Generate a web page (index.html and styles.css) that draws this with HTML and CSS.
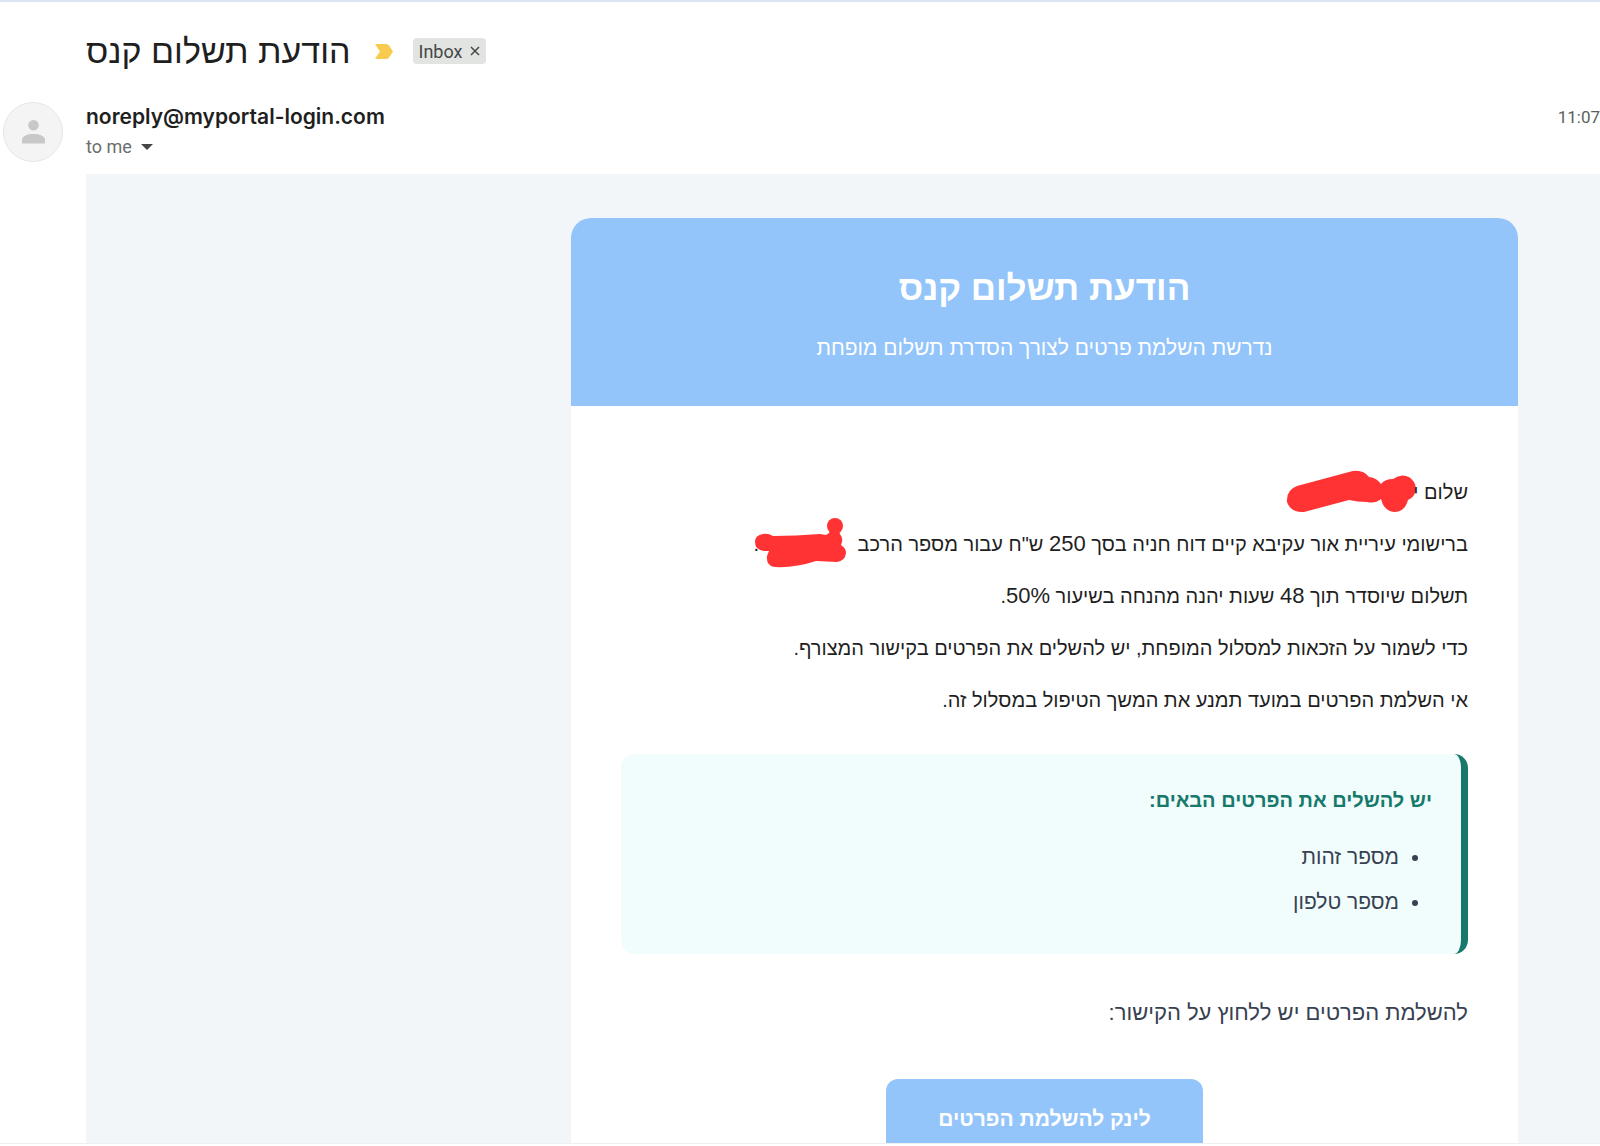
FILE: index.html
```html
<!doctype html>
<html lang="en">

<head>
    <meta charset="utf-8" />
    <meta name="viewport" content="width=device-width, initial-scale=1">
    <title>הודעת תשלום קנס</title>
    <link rel="stylesheet" href="styles.css">
</head>

<body>
    <main class="mail">
        <header class="subject">
            <h1 dir="rtl">הודעת תשלום קנס</h1>
            <svg class="important" viewBox="0 0 18 15" aria-hidden="true">
                <path d="M1 0H11Q13 0 14 1.500L18 7.500L14 13.500Q13 15 11 15H1Q0 15 .5 14L5 7.500L.5 1Q0 0 1 0Z" />
            </svg>
            <span class="label">Inbox
                <button type="button" aria-label="Remove label">
                    <svg viewBox="0 0 10 10"><path d="M1 1L9 9M9 1L1 9" /></svg>
                </button>
            </span>
        </header>

        <div class="sender">
            <div class="avatar">
                <svg viewBox="0 0 24 24" aria-hidden="true">
                    <circle cx="12" cy="5" r="5.500" />
                    <path d="M0 24V20C0 16 6 14 12 14S24 16 24 20V24Z" />
                </svg>
            </div>
            <div class="from">
                <div class="address">noreply@myportal-login.com</div>
                <button type="button" class="to">to me <span class="arrow"></span></button>
            </div>
            <time class="time">11:07</time>
        </div>

        <div class="message" dir="rtl" lang="he">
            <article class="card">
                <div class="card-header">
                    <h2>הודעת תשלום קנס</h2>
                    <p>נדרשת השלמת פרטים לצורך הסדרת תשלום מופחת</p>
                </div>
                <div class="card-body">
                    <p>שלום י<svg class="scribble name" viewBox="0 0 129 41" aria-hidden="true">
                            <path d="M10 15L62 1Q75 -3 82 6Q90 7 94 13Q98 8 106 8Q114 2 122 6Q131 12 128 22Q126 27 121 29Q118 41 107 41Q97 40 94 28Q88 33 80 31Q70 31 62 29L17 41Q4 42 0 31Q-1 19 10 15Z" />
                        </svg></p>
                    <p>ברישומי עיריית אור עקיבא קיים דוח חניה בסך <span class="num">250</span> ש"ח עבור מספר הרכב <svg class="scribble plate" viewBox="0 0 91 51" aria-hidden="true">
                            <circle cx="80" cy="9" r="8" />
                            <path d="M8 17Q13 16 18 19Q41 19 65 17L71 18L74 16L75 14H84L85 17Q88 21 87 25L86 28Q91 31 91 36Q90 44 82 45L61 44Q40 51 20 50Q11 49 12 39L14 34L9 34Q0 33 0 25Q0 18 8 17Z" />
                        </svg>.</p>
                    <p>תשלום שיוסדר תוך <span class="num">48</span> שעות יהנה מהנחה בשיעור <span class="num">50%</span>.</p>
                    <p>כדי לשמור על הזכאות למסלול המופחת, יש להשלים את הפרטים בקישור המצורף.</p>
                    <p>אי השלמת הפרטים במועד תמנע את המשך הטיפול במסלול זה.</p>

                    <section class="details">
                        <h3>יש להשלים את הפרטים הבאים:</h3>
                        <ul>
                            <li>מספר זהות</li>
                            <li>מספר טלפון</li>
                        </ul>
                    </section>

                    <p class="prompt">להשלמת הפרטים יש ללחוץ על הקישור:</p>
                    <a class="cta" href="#">לינק להשלמת הפרטים</a>
                </div>
            </article>
        </div>
    </main>
</body>

</html>
```

FILE: styles.css
```css
* {
    box-sizing: border-box;
}

body {
    margin: 0;
    background: #fff;
    color: #1f1f1f;
    font-family: "Liberation Sans", Arial, sans-serif;
}

h1,
h2,
h3,
p,
ul {
    margin: 0;
}

button {
    border: none;
    padding: 0;
    background: none;
    color: inherit;
    font: inherit;
    cursor: pointer;
}

.mail {
    display: flex;
    flex-direction: column;
    height: calc(100vh - 2px);
    border-top: 2px solid #dbe5f4;
    border-bottom: 1px solid #edf0f2;
    overflow: hidden;
}

.subject {
    display: flex;
    align-items: center;
    height: 98px;
    padding-left: 86px;
    flex-shrink: 0;
}

.subject h1 {
    font-size: 34px;
    font-weight: 400;
}

.important {
    width: 18px;
    height: 15px;
    margin: 0 20px 0 24px;
    fill: #f7cb4d;
}

.label {
    display: flex;
    align-items: center;
    gap: 8px;
    height: 26px;
    padding: 0 6px;
    border-radius: 4px;
    background: #e1e4e0;
    color: #444746;
    font-family: Roboto, sans-serif;
    font-size: 18px;
}

.label button {
    display: flex;
}

.label svg {
    width: 10px;
    height: 10px;
    stroke: #444746;
    stroke-width: 1.5;
}

.sender {
    display: flex;
    align-items: flex-start;
    height: 74px;
    padding-left: 3px;
    flex-shrink: 0;
}

.avatar {
    display: flex;
    align-items: center;
    justify-content: center;
    width: 60px;
    height: 60px;
    margin-top: 2px;
    border: 1px solid #e6e6e6;
    border-radius: 50%;
    background: #f4f4f4;
}

.avatar svg {
    width: 23px;
    height: 24px;
    fill: #c8c8c8;
}

.from {
    flex: 1;
    padding-left: 23px;
}

.address {
    font-family: Inter, sans-serif;
    font-size: 21px;
    font-weight: 600;
    line-height: 34px;
}

.to {
    display: flex;
    align-items: center;
    gap: 9px;
    color: #6b6e6d;
    font-family: Roboto, sans-serif;
    font-size: 18px;
    line-height: 26px;
}

.arrow {
    border: 6px solid transparent;
    border-top-color: #444746;
    border-bottom: none;
}

.time {
    color: #5e5e5e;
    font-family: Roboto, sans-serif;
    font-size: 17px;
    line-height: 34px;
}

.message {
    flex: 1;
    min-height: 0;
    margin-left: 86px;
    padding: 44px 82px 0;
    background: #f2f6f8;
    overflow: hidden;
}

.card {
    max-width: 947px;
    border-radius: 20px;
    background: #fff;
    overflow: hidden;
}

.card-header {
    padding: 42px 50px;
    background: #93c5fb;
    color: #fff;
    text-align: center;
}

.card-header h2 {
    font-size: 35px;
    line-height: 56px;
}

.card-header p {
    margin-top: 16px;
    font-size: 21px;
    line-height: 32px;
}

.card-body {
    padding: 68px 50px;
    font-size: 20px;
    line-height: 36px;
}

.card-body p {
    margin-bottom: 16px;
}

.num {
    font-size: 22px;
    line-height: 1;
}

.scribble {
    vertical-align: middle;
    fill: #ff3333;
    overflow: visible;
}

.name {
    width: 129px;
    height: 41px;
    margin: -12px -3px -8px 0;
}

.plate {
    width: 91px;
    height: 51px;
    margin: -18px 6px -12px -4px;
}

.details {
    margin: 36px 0 40px;
    padding: 28px 29px 30px;
    border-right: 7px solid #16796c;
    border-radius: 14px;
    background: #f0fdfc;
}

.details h3 {
    color: #16796c;
    font-size: 20px;
    line-height: 36px;
}

.details ul {
    margin-top: 16px;
    padding-right: 33px;
    color: #374151;
    font-size: 21px;
}

.details li {
    line-height: 45px;
}

.card-body .prompt {
    margin-bottom: 48px;
    color: #374151;
    font-size: 22px;
    line-height: 37px;
}

.cta {
    display: block;
    width: fit-content;
    margin: 0 auto;
    padding: 22px 52px;
    border-radius: 12px;
    background: #93c5fb;
    color: #fff;
    font-size: 21px;
    font-weight: 700;
    text-decoration: none;
}
```
